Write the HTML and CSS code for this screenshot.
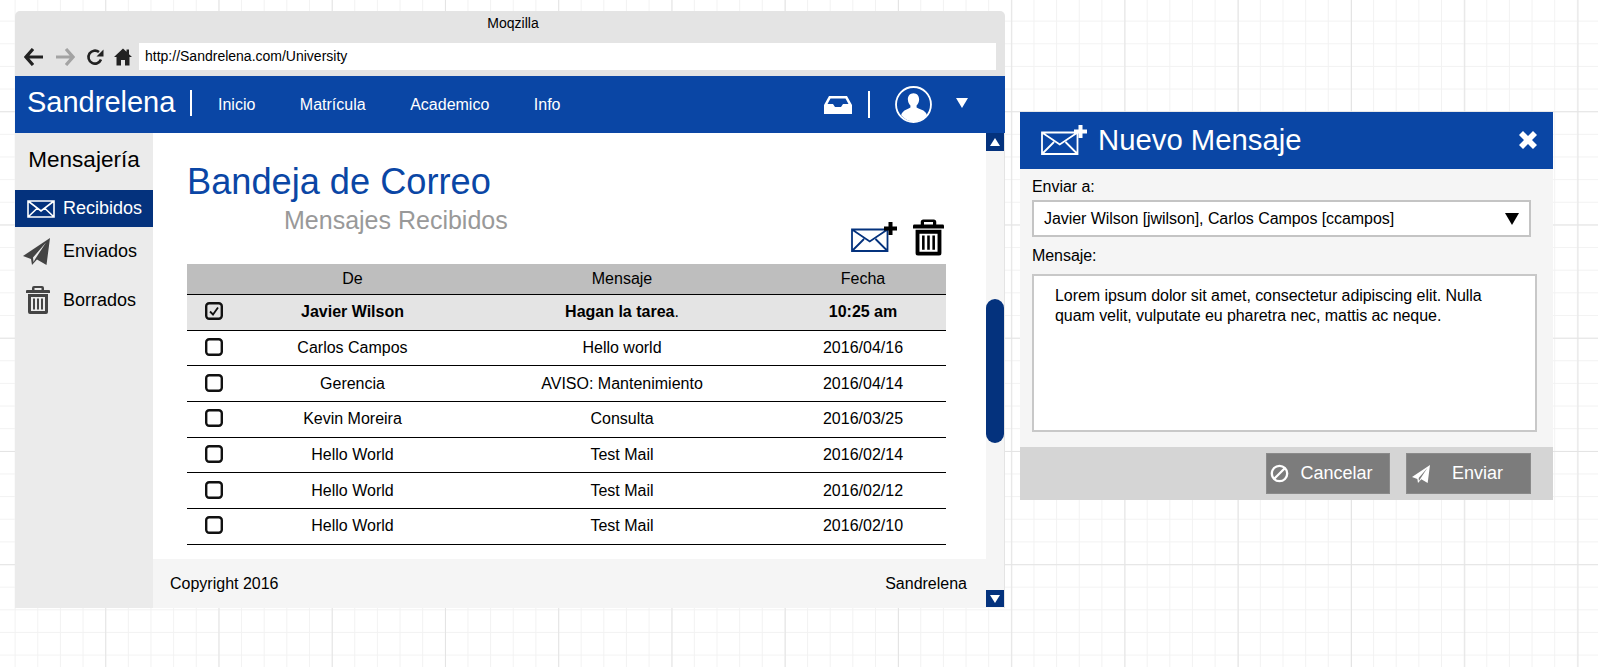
FILE: index.html
```html
<!DOCTYPE html>
<html lang="en">
<head>
    <meta charset="UTF-8" />
    <title>Moqzilla - Bandeja de Correo</title>
    <link rel="stylesheet" href="styles.css">
</head>
<body>

<svg class="defs" width="0" height="0">
    <symbol id="mail" viewBox="0 0 28 18">
        <path d="M1 1h26v16H1zM1 1l13 10L27 1M1 17l9.500-9M27 17l-9.500-9" fill="none" stroke="currentColor" stroke-width="1.600" />
    </symbol>
    <symbol id="mail-plus" viewBox="0 0 46 30">
        <path d="M1 7.500h35.500V29H1zM1 7.500l17.750 12 17.750-12M1 29l12-12M36.500 29l-12-12" fill="none" stroke="currentColor" stroke-width="1.800" />
        <path class="plus" d="M37.500 0h4v4.500H46v4h-4.500V13h-4V8.500H33v-4h4.500z" />
    </symbol>
    <symbol id="plane" viewBox="0 0 27 27">
        <path fill="currentColor" fill-rule="evenodd" d="M27 0L0 18l8 3 1 6 5-5.500 9.500 5.500zM23 4.500L10 19.500l.5 4.500 2-3.500z" />
    </symbol>
    <symbol id="trash" viewBox="0 0 24 28">
        <path fill="currentColor" fill-rule="evenodd" d="M8 0h8a2 2 0 0 1 2 2v2h5a1 1 0 0 1 1 1v2H0V5a1 1 0 0 1 1-1h5V2a2 2 0 0 1 2-2zM8.500 2v2h7V2zM2 8h20v18a2 2 0 0 1-2 2H4a2 2 0 0 1-2-2zM5 11v14h14V11zM7 12.500h2v11H7zM11 12.500h2v11h-2zM15 12.500h2v11h-2z" />
    </symbol>
    <symbol id="check" viewBox="0 0 18 18">
        <rect x="1.200" y="1.200" width="15.600" height="15.600" rx="3" fill="none" stroke="#111" stroke-width="2.400" />
    </symbol>
</svg>

<div class="browser">
    <div class="titlebar">Moqzilla</div>
    <div class="addressbar">
        <svg class="tool" viewBox="0 0 20 18"><path d="M9 1L2 9l7 8M2.500 9H19" fill="none" stroke="#222" stroke-width="3.200" /></svg>
        <svg class="tool" viewBox="0 0 20 18"><path d="M11 1l7 8-7 8M17.500 9H1" fill="none" stroke="#a3a3a3" stroke-width="3.200" /></svg>
        <svg class="tool" viewBox="0 0 18 18"><path d="M15 11.500A6.500 6.500 0 1 1 13 4" fill="none" stroke="#222" stroke-width="2.600" /><path d="M17.500 1.500v7h-7z" fill="#222" /></svg>
        <svg class="tool" viewBox="0 0 18 18"><path d="M9 .5L0 9h2.500v8.500H7V12h4v5.500h4.500V9H18l-3-2.800V1.500h-2.500v2.300z" fill="#222" /></svg>
        <div class="url">http://Sandrelena.com/University</div>
    </div>

    <nav class="navbar">
        <div class="brand">Sandrelena</div>
        <a href="#">Inicio</a>
        <a href="#">Matrícula</a>
        <a href="#">Academico</a>
        <a href="#">Info</a>
        <div class="nav-right">
            <svg class="inbox" viewBox="0 0 28 18"><path d="M5 0h18l5 9v9H0V9zM6.500 2.500L3.500 8H9l2 3h6l2-3h5.500l-3-5.500z" fill="#fff" fill-rule="evenodd" /></svg>
            <span class="nav-sep"></span>
            <svg class="avatar" viewBox="0 0 36 36"><circle cx="18" cy="18" r="17" fill="none" stroke="#fff" stroke-width="1.800" /><path d="M18 7c3.500 0 5.500 2.700 5.500 6 0 2.500-1 4.600-2.500 6v2c2 1.500 6.500 2.200 8.500 4.500 1 1 1.300 2 1.500 3A16.500 16.500 0 0 1 18 34.500 16.500 16.500 0 0 1 6 28.500c.2-1 .5-2 1.500-3C9.500 23.200 13 22.500 15 21v-2c-1.500-1.400-2.500-3.500-2.500-6 0-3.300 2-6 5.500-6z" fill="#fff" /></svg>
            <span class="caret"></span>
        </div>
    </nav>

    <div class="main">
        <aside class="sidebar">
            <h3>Mensajería</h3>
            <a class="side-item active" href="#"><svg class="side-mail"><use href="#mail" /></svg>Recibidos</a>
            <a class="side-item sent" href="#"><svg class="side-plane"><use href="#plane" /></svg>Enviados</a>
            <a class="side-item deleted" href="#"><svg class="side-trash"><use href="#trash" /></svg>Borrados</a>
        </aside>

        <div class="content">
            <div class="page">
                <div class="page-head">
                    <div class="titles">
                        <h1>Bandeja de Correo</h1>
                        <h2>Mensajes Recibidos</h2>
                    </div>
                    <div class="actions">
                        <svg class="act-mail"><use href="#mail-plus" /></svg>
                        <svg class="act-trash"><use href="#trash" /></svg>
                    </div>
                </div>
                <table class="mail-table">
                    <thead>
                        <tr><th class="col-check"></th><th class="col-from">De</th><th class="col-msg">Mensaje</th><th>Fecha</th></tr>
                    </thead>
                    <tbody>
                        <tr class="unread">
                            <td><svg class="box" viewBox="0 0 18 18"><use href="#check" /><path d="M5 9.500l3 3 5-7" fill="none" stroke="#111" stroke-width="1.800" /></svg></td>
                            <td>Javier Wilson</td><td>Hagan la tarea<span class="dot">.</span></td><td>10:25 am</td>
                        </tr>
                        <tr><td><svg class="box" viewBox="0 0 18 18"><use href="#check" /></svg></td><td>Carlos Campos</td><td>Hello world</td><td>2016/04/16</td></tr>
                        <tr><td><svg class="box" viewBox="0 0 18 18"><use href="#check" /></svg></td><td>Gerencia</td><td>AVISO: Mantenimiento</td><td>2016/04/14</td></tr>
                        <tr><td><svg class="box" viewBox="0 0 18 18"><use href="#check" /></svg></td><td>Kevin Moreira</td><td>Consulta</td><td>2016/03/25</td></tr>
                        <tr><td><svg class="box" viewBox="0 0 18 18"><use href="#check" /></svg></td><td>Hello World</td><td>Test Mail</td><td>2016/02/14</td></tr>
                        <tr><td><svg class="box" viewBox="0 0 18 18"><use href="#check" /></svg></td><td>Hello World</td><td>Test Mail</td><td>2016/02/12</td></tr>
                        <tr><td><svg class="box" viewBox="0 0 18 18"><use href="#check" /></svg></td><td>Hello World</td><td>Test Mail</td><td>2016/02/10</td></tr>
                    </tbody>
                </table>
            </div>
            <footer class="page-footer">
                <span>Copyright 2016</span>
                <span>Sandrelena</span>
            </footer>
        </div>

        <div class="scrollbar">
            <div class="scroll-btn"><span class="arrow-up"></span></div>
            <div class="scroll-track"><div class="scroll-thumb"></div></div>
            <div class="scroll-btn scroll-btn-down"><span class="arrow-down"></span></div>
        </div>
    </div>
</div>

<div class="modal">
    <div class="modal-head">
        <svg class="modal-mail"><use href="#mail-plus" /></svg>
        <span class="modal-title">Nuevo Mensaje</span>
        <svg class="modal-close" viewBox="0 0 18 18"><path d="M4 0l5 5 5-5 4 4-5 5 5 5-4 4-5-5-5 5-4-4 5-5-5-5z" fill="#fff" /></svg>
    </div>
    <div class="modal-body">
        <label>Enviar a:</label>
        <div class="select-box">
            <span>Javier Wilson [jwilson], Carlos Campos [ccampos]</span>
            <span class="select-caret"></span>
        </div>
        <label class="label-msg">Mensaje:</label>
        <div class="textarea">Lorem ipsum dolor sit amet, consectetur adipiscing elit. Nulla quam velit, vulputate eu pharetra nec, mattis ac neque.</div>
    </div>
    <div class="modal-foot">
        <button class="btn btn-cancel">
            <svg viewBox="0 0 18 18"><circle cx="9" cy="9" r="7.300" fill="none" stroke="#fff" stroke-width="2.200" /><path d="M4 14L14 4" stroke="#fff" stroke-width="2.200" /></svg>
            Cancelar
        </button>
        <button class="btn btn-send">
            <svg class="btn-plane"><use href="#plane" /></svg>
            Enviar
        </button>
    </div>
</div>

</body>
</html>
```

FILE: styles.css
```css
html, body {
    margin: 0;
    height: 100%;
}
body {
    font-family: "Liberation Sans", Arial, sans-serif;
    color: #000;
    height: 667px;
    overflow: hidden;
    box-sizing: border-box;
    display: flex;
    align-items: flex-start;
    padding: 11px 0 0 15px;
    background-color: #fff;
    background-image:
        linear-gradient(to right, #e4e4e4 1px, transparent 1px),
        linear-gradient(to bottom, #e4e4e4 1px, transparent 1px),
        linear-gradient(to right, #f2f2f2 1px, transparent 1px),
        linear-gradient(to bottom, #f2f2f2 1px, transparent 1px);
    background-size: 113.25px 113.25px, 113.25px 113.25px, 22.65px 22.65px, 22.65px 22.65px;
    background-position: -8px -2px, -8px -2px, -8px -2px, -8px -2px;
}
.defs {
    position: absolute;
}

/* browser window */
.browser {
    width: 990px;
    flex-shrink: 0;
    border-radius: 5px 5px 0 0;
    overflow: hidden;
    background-color: #e4e4e4;
}
.titlebar {
    height: 32px;
    line-height: 24px;
    padding-left: 6px;
    text-align: center;
    font-size: 14px;
}
.addressbar {
    height: 33px;
    display: flex;
    align-items: flex-start;
    padding-left: 9px;
}
.tool {
    width: 20px;
    height: 18px;
    margin-top: 5px;
    margin-right: 11px;
}
.tool:nth-child(3),
.tool:nth-child(4) {
    width: 18px;
    margin-right: 10px;
}
.url {
    flex: 1;
    height: 27px;
    line-height: 27px;
    margin: 0 9px 0 -3px;
    padding-left: 6px;
    background-color: #fff;
    font-size: 14px;
}
.navbar {
    height: 57px;
    background-color: #0a46a5;
    color: #fff;
    display: flex;
    align-items: center;
}
.brand {
    font-size: 29px;
    padding: 0 0 0 12px;
    margin-bottom: 6px;
    width: 187px;
    box-sizing: border-box;
    line-height: 28px;
    background: linear-gradient(#fff, #fff) no-repeat 175px 2px / 2px 26px;
}
.navbar a {
    color: #fff;
    text-decoration: none;
    font-size: 16px;
    margin-left: 16px;
    margin-right: 28.500px;
}
.nav-right {
    margin-left: auto;
    display: flex;
    align-items: center;
}
.inbox {
    width: 28px;
    height: 18px;
}
.nav-sep {
    width: 2px;
    height: 27px;
    background-color: #fff;
    margin: 0 25px 0 16px;
}
.avatar {
    width: 37px;
    height: 37px;
}
.caret {
    width: 0;
    height: 0;
    border-left: 6px solid transparent;
    border-right: 6px solid transparent;
    border-top: 10px solid #fff;
    margin: 0 37px 4px 24px;
}

.main {
    height: 475px;
    display: flex;
}

/* sidebar */
.sidebar {
    width: 138px;
    background-color: #ebebeb;
}
.sidebar h3 {
    font-size: 22.500px;
    font-weight: normal;
    text-align: center;
    margin: 0;
    height: 57px;
    line-height: 54px;
}
.side-item {
    display: flex;
    align-items: center;
    height: 37px;
    color: #000;
    text-decoration: none;
    font-size: 18px;
    padding-left: 48px;
    position: relative;
}
.side-item svg {
    position: absolute;
}
.side-item.active {
    background-color: #04327d;
    color: #fff;
}
.side-item.sent {
    height: 49px;
}
.side-item.deleted {
    height: 48px;
}
.side-mail {
    left: 12px;
    width: 28px;
    height: 18px;
}
.side-plane {
    left: 8px;
    width: 27px;
    height: 27px;
    color: #444;
}
.side-trash {
    left: 11px;
    width: 24px;
    height: 28px;
    color: #444;
}

/* main content */
.content {
    flex: 1;
    display: flex;
    flex-direction: column;
    background-color: #fff;
}
.page {
    flex: 1;
    padding: 0 40px 0 34px;
}
.page-head {
    height: 131px;
    display: flex;
    justify-content: space-between;
    align-items: flex-end;
}
.titles {
    align-self: flex-start;
}
h1 {
    margin: 25px 0 0;
    font-size: 36.200px;
    line-height: 48px;
    font-weight: normal;
    color: #0a46a5;
}
h2 {
    margin: 0 0 0 97px;
    font-size: 25px;
    line-height: 28px;
    font-weight: normal;
    color: #999;
}
.actions {
    display: flex;
    align-items: flex-end;
    gap: 16px;
    margin-right: 2px;
    padding-bottom: 8px;
}
.act-mail {
    width: 46px;
    height: 30px;
    margin-bottom: 4px;
    color: #04327d;
    --plus-color: #000;
}
.plus {
    fill: var(--plus-color);
}
.act-trash {
    width: 31px;
    height: 37px;
    color: #000;
}
.mail-table {
    width: 759px;
    border-collapse: collapse;
    table-layout: fixed;
    font-size: 16px;
    text-align: center;
}
.mail-table th {
    height: 30px;
    padding: 0;
    font-weight: normal;
    background-color: #bebebe;
}
.mail-table td {
    height: 34.700px;
    padding: 0;
    border-bottom: 1px solid #000;
    border-top: 0;
}
.col-check {
    width: 54px;
}
.col-from {
    width: 223px;
}
.col-msg {
    width: 316px;
}
.unread td {
    background-color: #e4e4e4;
    font-weight: bold;
    border-top: 1px solid #000;
}
.dot {
    font-weight: normal;
}
.box {
    display: block;
    width: 18px;
    height: 18px;
    margin: -1px 0 1px 18px;
}
.page-footer {
    height: 49px;
    box-sizing: border-box;
    padding: 1px 19px 0 17px;
    background-color: #f5f5f5;
    display: flex;
    justify-content: space-between;
    align-items: center;
    font-size: 16px;
}

/* scrollbar */
.scrollbar {
    width: 18px;
    margin-right: 1px;
    padding-bottom: 1px;
    background-color: #f5f5f5;
    display: flex;
    flex-direction: column;
}
.scroll-btn {
    height: 18px;
    background-color: #04327d;
    display: flex;
    align-items: center;
    justify-content: center;
}
.scroll-btn-down {
    height: 17px;
}
.arrow-up,
.arrow-down {
    width: 0;
    height: 0;
    border-left: 5px solid transparent;
    border-right: 5px solid transparent;
}
.arrow-up {
    border-bottom: 8px solid #fff;
}
.arrow-down {
    border-top: 8px solid #fff;
}
.scroll-track {
    flex: 1;
    padding-top: 148px;
}
.scroll-thumb {
    height: 144px;
    background-color: #04327d;
    border-radius: 9px;
}

/* new message dialog */
.modal {
    width: 533px;
    margin: 101px 0 0 15px;
    flex-shrink: 0;
    background-color: #f5f5f5;
}
.modal-head {
    height: 57px;
    box-sizing: border-box;
    padding: 0 16px 2px 21px;
    background-color: #0a46a5;
    color: #fff;
    display: flex;
    align-items: center;
}
.modal-mail {
    width: 46px;
    height: 30px;
    margin-right: 11px;
    color: #fff;
    --plus-color: #fff;
}
.modal-title {
    font-size: 29.300px;
    flex: 1;
}
.modal-close {
    width: 18px;
    height: 18px;
}
.modal-body {
    height: 278px;
    box-sizing: border-box;
    padding: 8px 16px 0 12px;
    font-size: 16px;
    letter-spacing: -0.060px;
}
.modal-body label {
    display: block;
    line-height: 20px;
}
.select-box {
    width: 499px;
    height: 37px;
    margin-top: 3px;
    border: 2px solid #c4c4c4;
    background-color: #fff;
    display: flex;
    align-items: center;
    justify-content: space-between;
    padding: 0 10px;
    box-sizing: border-box;
}
.select-caret {
    width: 0;
    height: 0;
    border-left: 7px solid transparent;
    border-right: 7px solid transparent;
    border-top: 12px solid #000;
}
.modal-body .label-msg {
    margin-top: 9px;
}
.textarea {
    height: 158px;
    box-sizing: border-box;
    margin-top: 8px;
    border: 2px solid #c8c8c8;
    background-color: #fff;
    padding: 10px 44px 0 21px;
    line-height: 20px;
}
.modal-foot {
    height: 53px;
    background-color: #d5d5d5;
    display: flex;
    align-items: center;
    justify-content: flex-end;
    gap: 16px;
    padding-right: 22px;
}
.btn {
    width: 124px;
    height: 41px;
    border: 1px solid #8a8a8a;
    background-color: #7c7c7c;
    color: #fff;
    font-family: inherit;
    font-size: 18px;
    display: flex;
    align-items: center;
    padding: 0;
    cursor: pointer;
}
.btn-send {
    width: 125px;
}
.btn-cancel svg {
    width: 19px;
    height: 19px;
    margin: 0 12px 0 2.500px;
}
.btn-plane {
    width: 18px;
    height: 18px;
    margin: 0 22px 0 5px;
    color: #fff;
}
```
